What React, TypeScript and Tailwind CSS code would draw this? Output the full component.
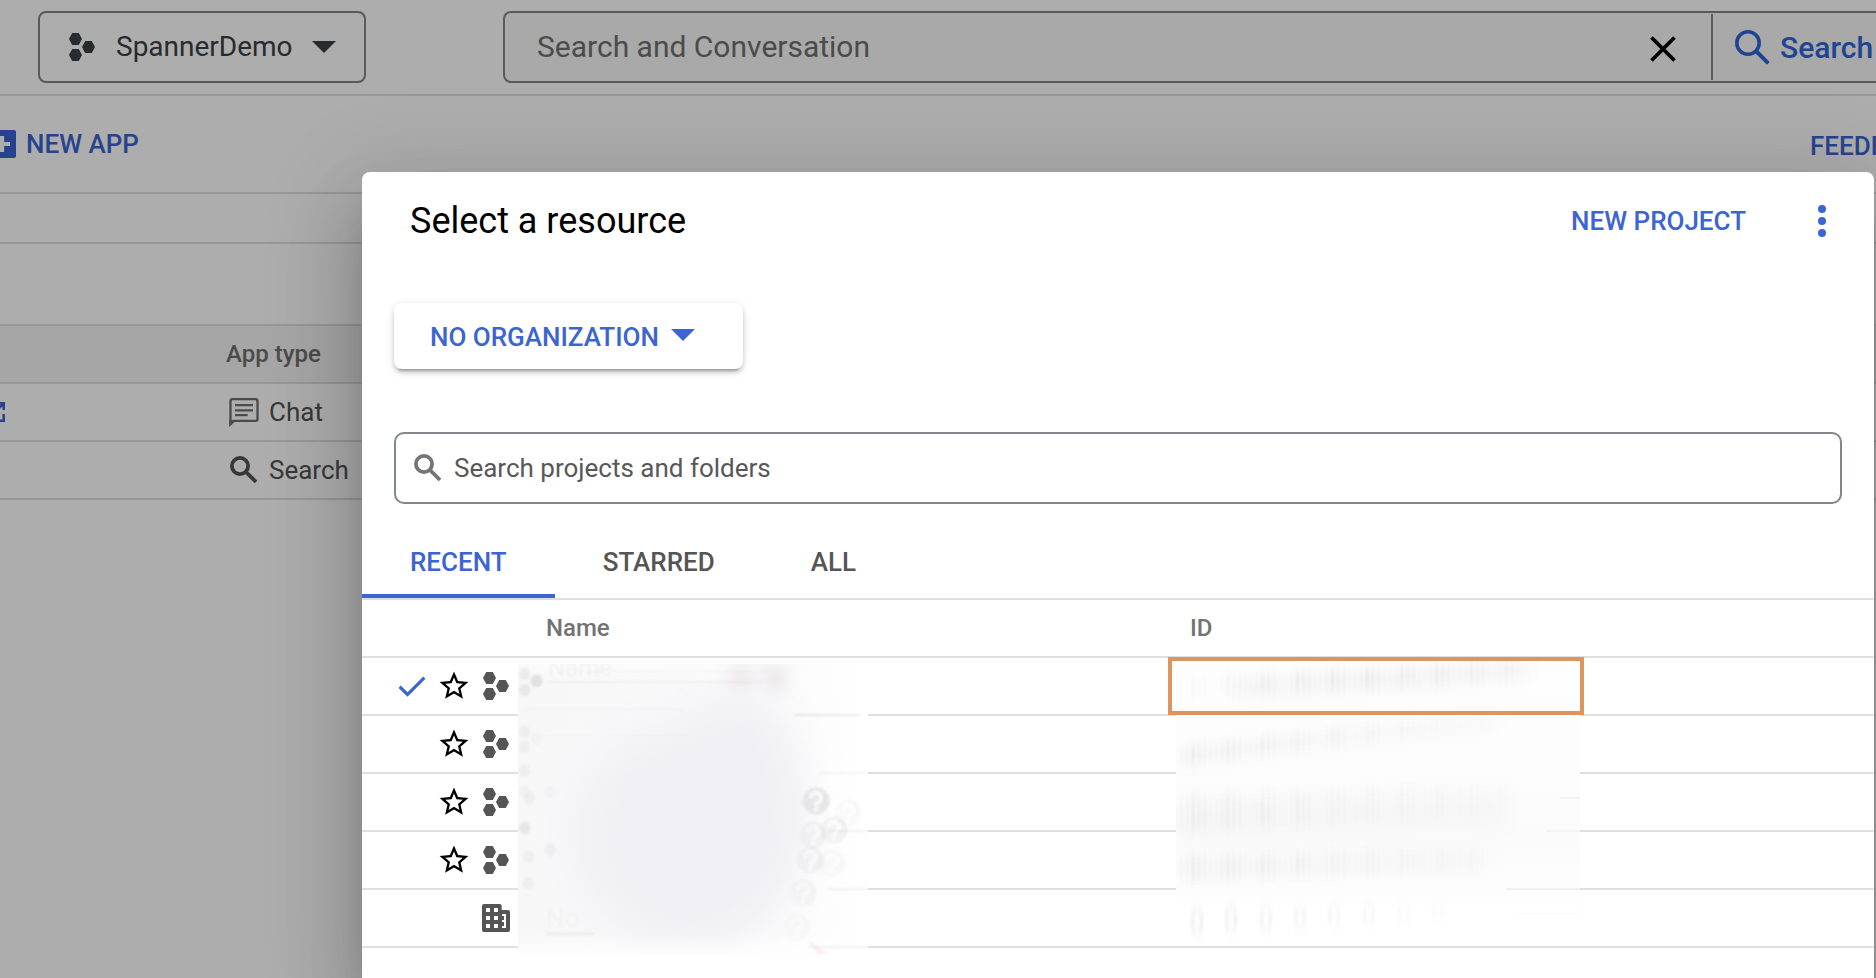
import React from "react";

function HexIcon({ className }: { className: string }) {
  return (
    <svg viewBox="0 0 26 28" className={`h-7 w-[26px] shrink-0 ${className}`} fill="currentColor" aria-hidden="true">
      <path d="M3.2 0h6.6L13 6l-3.2 6H3.2L0 6z" />
      <path d="M3.2 16h6.6l3.2 6-3.2 6H3.2L0 22z" />
      <path d="M16.2 8h6.6L26 14l-3.2 6h-6.6L13 14z" />
    </svg>
  );
}

function Caret({ className }: { className: string }) {
  return (
    <svg viewBox="0 0 24 12" className={`h-3 w-6 shrink-0 ${className}`} fill="currentColor" aria-hidden="true">
      <path d="M0 0h24L12 12z" />
    </svg>
  );
}

function SearchIcon({ className }: { className: string }) {
  return (
    <svg viewBox="0 0 28 28" className={`size-7 shrink-0 ${className}`} fill="none" stroke="currentColor" strokeWidth="3.8" aria-hidden="true">
      <circle cx="10" cy="10" r="8.1" />
      <path d="M15.6 15.6L26 26" />
    </svg>
  );
}

function LargeSearchIcon() {
  return (
    <svg viewBox="0 0 35 35" className="size-[35px] shrink-0" fill="none" stroke="currentColor" aria-hidden="true">
      <circle cx="13" cy="13" r="11.2" strokeWidth="3.6" />
      <path d="M20.5 20.5L33.3 33.3" strokeWidth="4" />
    </svg>
  );
}

function CheckIcon() {
  return (
    <svg viewBox="0 0 24 24" className="size-9 text-[#3c64d2]" fill="currentColor" aria-label="Selected">
      <path d="M9 16.170L4.500 11.670l-1.500 1.600L9 19.200 21 7.100l-1.500-1.500z" />
    </svg>
  );
}

function StarIcon() {
  return (
    <svg viewBox="0 0 24 24" className="size-9" fill="currentColor" aria-hidden="true">
      <path d="M21.6 9.27l-6.9-.6L12 2.3 9.3 8.68l-6.9.59 5.24 4.54-1.57 6.74L12 16.98l5.93 3.57-1.56-6.74 5.23-4.54zM12 15.2l-3.6 2.17.96-4.1-3.18-2.75 4.2-.36L12 6.3l1.64 3.87 4.2.36-3.18 2.75.96 4.1L12 15.2z" />
    </svg>
  );
}

function BuildingIcon() {
  return (
    <svg viewBox="0 0 84 84" className="size-7 shrink-0 text-[#555]" fill="currentColor" fillRule="evenodd" aria-hidden="true">
      <path d="M6 0h47q6 0 6 6v12h19q6 0 6 6v54q0 6-6 6H6q-6 0-6-6V6q0-6 6-6zM12 12v12h12V12zM36 12v12h12V12zM12 36v12h12V36zM36 36v12h12V36zM12 60v12h12V60zM36 60v12h12V60zM60 30v6h6v12h-6v6h6v12h-6v6h12V30z" />
    </svg>
  );
}

function ChatIcon() {
  return (
    <svg viewBox="0 0 88 87" className="h-[29px] w-[30px] shrink-0 text-[#6f6f6f]" aria-hidden="true">
      <path d="M3.5 76V9q0-5.500 5.500-5.500h70q5.500 0 5.500 5.500v54q0 5.500-5.500 5.500H12z" fill="none" stroke="currentColor" strokeWidth="7" />
      <path d="M0 66v21l19-18z" fill="currentColor" />
      <path d="M17 21.500h54M17 37h54M17 51.500h38" stroke="currentColor" strokeWidth="7" />
    </svg>
  );
}

/* Smeared patch that hides the project names. */
function NameRedaction() {
  const ghosts = [
    [298, 137, 0.11],
    [316, 166, 0.05],
    [295, 171, 0.04],
    [330, 149, 0.025],
    [292, 196, 0.045],
    [314, 199, 0.025],
    [285, 229, 0.03],
    [279, 263, 0.018],
  ];
  const hexes = [
    [0, 4, 0.05],
    [12, 11, 0.09],
    [0, 20, 0.06],
    [0, 62, 0.035],
    [12, 69, 0.02],
    [0, 77, 0.03],
    [0, 101, 0.03],
    [0, 122, 0.02],
    [5, 128, 0.03],
    [26, 122, 0.02],
    [0, 158, 0.06],
    [26, 180, 0.03],
    [4, 187, 0.03],
    [4, 213, 0.035],
  ];
  return (
    <svg viewBox="0 0 350 290" className="pointer-events-none absolute top-16 left-[156px] h-[290px] w-[350px]" aria-hidden="true">
      <defs>
        <filter id="soft" filterUnits="userSpaceOnUse" x="-100" y="-100" width="560" height="500">
          <feGaussianBlur stdDeviation="24" />
        </filter>
        <filter id="mid" filterUnits="userSpaceOnUse" x="-100" y="-100" width="560" height="500">
          <feGaussianBlur stdDeviation="9" />
        </filter>
        <filter id="light" filterUnits="userSpaceOnUse" x="-20" y="-20" width="400" height="340">
          <feGaussianBlur stdDeviation="0.8" />
        </filter>
        <linearGradient id="edge" x1="0" x2="1" y1="0" y2="0">
          <stop offset="0" stopColor="#f7f7f8" />
          <stop offset="0.5" stopColor="#f9f9fa" />
          <stop offset="0.8" stopColor="#fcfcfc" />
          <stop offset="1" stopColor="#ffffff" />
        </linearGradient>
        <linearGradient id="disc" x1="0" x2="1" y1="0" y2="0">
          <stop offset="0" stopColor="#333" stopOpacity="0.5" />
          <stop offset="1" stopColor="#333" />
        </linearGradient>
      </defs>
      <rect width="350" height="290" fill="url(#edge)" />
      <ellipse cx="172" cy="172" rx="112" ry="112" fill="#efeff5" filter="url(#soft)" />
      <ellipse cx="222" cy="110" rx="52" ry="80" fill="#efeff5" filter="url(#soft)" />
      <ellipse cx="223" cy="14" rx="10" ry="14" fill="#ebe5e8" filter="url(#mid)" />
      <ellipse cx="257" cy="14" rx="10" ry="14" fill="#e8e1e4" filter="url(#mid)" />
      <rect x="-40" y="282" width="430" height="20" fill="#ffffff" filter="url(#mid)" />
      <rect x="-40" y="-8" width="240" height="12" fill="#ffffff" filter="url(#mid)" />
      <g fill="#000" filter="url(#light)" fontFamily="Roboto, sans-serif">
        <rect x="60" y="7" width="190" height="1" opacity="0.03" />
        <rect x="30" y="17" width="215" height="2" opacity="0.03" />
        <rect x="6" y="45" width="160" height="1" opacity="0.03" />
        <rect x="20" y="71" width="150" height="1" opacity="0.02" />
        <rect x="276" y="50" width="66" height="2" opacity="0.08" />
        <rect x="300" y="108" width="60" height="2" opacity="0.04" />
        <rect x="310" y="166" width="50" height="2" opacity="0.05" />
        <rect x="310" y="224" width="50" height="2" opacity="0.05" />
        <rect x="290" y="282" width="70" height="2" opacity="0.05" />
        <rect x="28" y="269" width="48" height="2" fill="#5a5a9a" opacity="0.1" />
        <text x="30" y="12" fontSize="24" opacity="0.04">Name</text>
        <text x="28" y="263" fontSize="26" opacity="0.025">No</text>
        {hexes.map(([x, y, o], i) => (
          <path key={i} transform={`translate(${x} ${y})`} opacity={o} d="M3.200 0h6.600L13 6l-3.200 6H3.200L0 6z" />
        ))}
        <path d="M290 276l10 14h10z" fill="#d66" opacity="0.1" />
      </g>
      <g filter="url(#light)">
        {ghosts.map(([x, y, o], i) => (
          <g key={i} opacity={o}>
            <circle cx={x} cy={y} r="13.500" fill="url(#disc)" />
            <path d={`M${x - 5} ${y - 3}a5 5 0 1 1 7.500 4.200q-2.500 1.600-2.500 3.800M${x} ${y + 7}v3`} strokeWidth="2.600" fill="none" stroke="#fff" />
          </g>
        ))}
      </g>
    </svg>
  );
}

/* Smeared patch that hides the project IDs. */
function IdRedaction() {
  const bands = [
    { y0: 30, y1: 10, n: 62, h: 20, o: 0.04 },
    { y0: 98, y1: 62, n: 50, h: 18, o: 0.036 },
    { y0: 156, y1: 140, n: 58, h: 34, o: 0.026 },
    { y0: 210, y1: 200, n: 54, h: 24, o: 0.032 },
  ];
  return (
    <svg viewBox="0 0 404 286" className="pointer-events-none absolute top-[58px] left-[814px] h-[286px] w-[404px]" aria-hidden="true">
      <defs>
        <filter id="streak" filterUnits="userSpaceOnUse" x="-20" y="-20" width="450" height="330">
          <feGaussianBlur stdDeviation="1.2 6" />
        </filter>
        <filter id="haze" filterUnits="userSpaceOnUse" x="-60" y="-60" width="540" height="400">
          <feGaussianBlur stdDeviation="9" />
        </filter>
        <linearGradient id="idfade" x1="0" x2="0" y1="0" y2="1">
          <stop offset="0" stopColor="#fefefe" />
          <stop offset="0.3" stopColor="#fdfdfd" />
          <stop offset="0.65" stopColor="#fbfbfb" />
          <stop offset="0.92" stopColor="#ffffff" />
        </linearGradient>
      </defs>
      <rect width="404" height="286" fill="url(#idfade)" />
      <g stroke="#000" fill="none" filter="url(#haze)">
        <path d="M60 30L230 22 350 12" strokeOpacity="0.035" strokeWidth="18" />
        <path d="M0 100L120 84 320 64" strokeOpacity="0.022" strokeWidth="16" />
        <path d="M0 162L330 152" strokeOpacity="0.02" strokeWidth="40" />
        <path d="M0 212L310 202" strokeOpacity="0.022" strokeWidth="20" />
      </g>
      <g filter="url(#streak)" fill="#000">
        {bands.map((b, k) =>
          Array.from({ length: b.n }, (_, i) => {
            const t = i / b.n;
            const wave = [0.4, 0.7, 1.7, 1.3, 1, 0.4][i % 6];
            const fade = k === 0 ? 1.1 - 1.4 * Math.abs(t - 0.5) : 1.1 - t;
            return (
              <rect
                key={`${k}-${i}`}
                x={4 + i * 5.8}
                y={b.y0 + (b.y1 - b.y0) * t - b.h / 2}
                width="3"
                height={b.h}
                opacity={b.o * wave * fade}
              />
            );
          })
        )}
      </g>
      <g fill="none" stroke="#000" strokeWidth="2.500" filter="url(#streak)">
        {[21, 55, 90, 124, 158, 193, 228, 262].map((x, i) => (
          <ellipse key={x} cx={x} cy={264 - i * 1.5} rx="5" ry={12 - i * 0.6} opacity={0.08 - i * 0.008} />
        ))}
      </g>
      <rect x="330" y="230" width="74" height="2" fill="#000" opacity="0.05" />
      <rect x="370" y="172" width="34" height="2" fill="#000" opacity="0.03" />
      <rect x="384" y="139" width="20" height="2" fill="#000" opacity="0.03" />
      <rect x="340" y="255" width="64" height="1" fill="#000" opacity="0.015" />
    </svg>
  );
}

function Console() {
  return (
    <div className="min-h-screen bg-white">
      <header className="flex h-24 items-start border-b-2 border-[#dfdfdf] pt-[11px] pl-[38px]">
        <button className="flex h-[72px] w-[328px] shrink-0 items-center rounded-lg border-2 border-[#80868b] pl-[29px] text-[28px] text-[#3c4043]">
          <HexIcon className="mr-[21px] text-[#3c4043]" />
          <span>SpannerDemo</span>
          <Caret className="ml-[19px] text-[#3c4043]" />
        </button>
        <form className="ml-[137px] flex h-[72px] min-w-0 grow items-center rounded-l-lg border-2 border-r-0 border-[#80868b] bg-[#fafafa]">
          <input
            aria-label="Search"
            defaultValue="Search and Conversation"
            className="h-full min-w-0 grow bg-transparent pb-0.5 pl-8 text-[30px] text-[#6f6f6f] outline-none"
          />
          <button type="button" aria-label="Clear" className="mr-[35px] shrink-0 p-0 text-black">
            <svg viewBox="0 0 26 26" className="mt-1 size-[26px]" stroke="currentColor" strokeWidth="3.800" aria-hidden="true">
              <path d="M1.500 1.500l23 23M24.500 1.500l-23 23" />
            </svg>
          </button>
          <button type="button" className="flex h-[66px] w-[165px] shrink-0 items-center gap-2.5 overflow-hidden border-l-2 border-[#80868b] pl-[22px] text-[30px] font-medium text-[#2e65d6]">
            <LargeSearchIcon />
            Search
          </button>
        </form>
      </header>
      <div className="flex h-[98px] items-center justify-between overflow-hidden border-b-2 border-[#dfdfdf] text-[26px] font-medium text-[#3c64d2]">
        <button className="-ml-3 flex items-center gap-2.5">
          <svg viewBox="0 0 28 28" className="size-7" aria-hidden="true">
            <rect width="28" height="28" rx="2" fill="currentColor" />
            <path d="M14 6v16M6 14h16" stroke="#fff" strokeWidth="4.200" />
          </svg>
          NEW APP
        </button>
        <button className="-mr-[70px] w-[136px] shrink-0 pt-1 text-left">FEEDBACK</button>
      </div>
      <div className="h-[50px] border-b-2 border-[#dfdfdf]" />
      <div className="h-[82px] border-b-2 border-[#dfdfdf]" />
      <table className="w-full table-fixed border-separate border-spacing-0 text-left text-[26px] text-[#535353]">
        <colgroup>
          <col className="w-[226px]" />
          <col />
        </colgroup>
        <thead>
          <tr className="h-[58px] bg-[#f5f5f5] text-2xl text-[#6f6f6f]">
            <th className="border-b-2 border-[#dfdfdf] p-0" />
            <th className="border-b-2 border-[#dfdfdf] p-0 font-medium">App type</th>
          </tr>
        </thead>
        <tbody>
          <tr className="h-[58px]">
            <td className="border-b-2 border-[#dfdfdf] p-0">
              <a href="#app" aria-label="Open app" className="-ml-[15px] block w-5 text-[#3c64d2]">
                <svg viewBox="0 0 20 20" className="size-5" fill="none" stroke="currentColor" strokeWidth="2.600" aria-hidden="true">
                  <path d="M8 1.300H1.300v17.400h17.400V12M12 1.300h6.700V8M18 2L7 13" />
                </svg>
              </a>
            </td>
            <td className="border-b-2 border-[#dfdfdf] p-0">
              <div className="flex items-center gap-[10px] pl-[3px]">
                <ChatIcon />
                Chat
              </div>
            </td>
          </tr>
          <tr className="h-[58px]">
            <td className="border-b-2 border-[#dfdfdf] p-0" />
            <td className="border-b-2 border-[#dfdfdf] p-0">
              <div className="flex items-center gap-[11px] pl-1">
                <SearchIcon className="text-[#535353]" />
                Search
              </div>
            </td>
          </tr>
        </tbody>
      </table>
    </div>
  );
}

const tabs = ["RECENT", "STARRED", "ALL"];

const rows = [
  { selected: true, org: false },
  { selected: false, org: false },
  { selected: false, org: false },
  { selected: false, org: false },
  { selected: false, org: true },
];

function ResourceDialog() {
  return (
    <section
      role="dialog"
      aria-modal="true"
      aria-labelledby="dialog-title"
      className="min-w-0 grow self-stretch rounded-t-lg bg-white shadow-[0_22px_30px_-14px_rgba(0,0,0,0.2),0_48px_76px_6px_rgba(0,0,0,0.14),0_18px_92px_16px_rgba(0,0,0,0.12)]"
    >
      <div className="flex h-[98px] items-center pr-[36px] pl-12">
        <h2 id="dialog-title" className="grow text-[36px] text-black">
          Select a resource
        </h2>
        <button className="text-[26px] font-medium text-[#3c64d2]">NEW PROJECT</button>
        <button aria-label="More options" className="ml-[60px] flex w-8 justify-center text-[#3c64d2]">
          <svg viewBox="0 0 8 32" className="h-8 w-2" fill="currentColor" aria-hidden="true">
            <circle cx="4" cy="4" r="4" />
            <circle cx="4" cy="16" r="4" />
            <circle cx="4" cy="28" r="4" />
          </svg>
        </button>
      </div>
      <button className="mt-[33px] ml-8 flex h-[66px] w-[349px] items-center rounded-lg bg-white pt-0.5 pl-9 text-[26px] font-medium text-[#3c64d2] shadow-[0_6px_2px_-4px_rgba(0,0,0,0.2),0_4px_4px_0_rgba(0,0,0,0.14),0_2px_10px_0_rgba(0,0,0,0.12)]">
        NO ORGANIZATION
        <Caret className="mb-1 ml-3" />
      </button>
      <label className="mx-8 mt-[63px] flex h-[72px] items-center rounded-[10px] border-2 border-[#80868b] pl-[18px]">
        <SearchIcon className="text-[#757575]" />
        <input
          aria-label="Search projects and folders"
          placeholder="Search projects and folders"
          className="ml-3 h-full min-w-0 grow bg-transparent text-[26px] text-[#585858] outline-none placeholder:text-[#585858]"
        />
      </label>
      <div role="tablist" className="mt-6 flex h-[72px] border-b-2 border-[#dfdfdf] text-[26px] font-medium">
        {tabs.map((tab, i) => (
          <button
            key={tab}
            role="tab"
            aria-selected={i === 0}
            className={
              i === 0
                ? "border-b-4 border-[#3c64d2] px-12 pt-0.5 text-[#3c64d2]"
                : "border-b-4 border-transparent px-12 pt-0.5 text-[#555]"
            }
          >
            {tab}
          </button>
        ))}
      </div>
      <div className="relative">
        <table className="w-full table-fixed border-separate border-spacing-0 text-left">
          <colgroup>
            <col className="w-[184px]" />
            <col className="w-[644px]" />
            <col />
          </colgroup>
          <thead>
            <tr className="h-[58px] text-2xl text-[#737373]">
              <th className="border-b-2 border-[#dfdfdf] p-0" />
              <th className="border-b-2 border-[#dfdfdf] p-0 font-medium">Name</th>
              <th className="border-b-2 border-[#dfdfdf] p-0 font-medium">ID</th>
            </tr>
          </thead>
          <tbody>
            {rows.map((row, i) => (
              <tr key={i} className="h-[58px]">
                <td className="border-b-2 border-[#dfdfdf] p-0">
                  <div className="flex items-center gap-1.5 pl-8">
                    <span className="size-9 shrink-0">{row.selected && <CheckIcon />}</span>
                    {row.org ? (
                      <span className="size-9 shrink-0" />
                    ) : (
                      <button aria-label="Star project" className="size-9 shrink-0 text-black">
                        <StarIcon />
                      </button>
                    )}
                    <span className="flex w-9 shrink-0 justify-center">
                      {row.org ? <BuildingIcon /> : <HexIcon className="text-[#555]" />}
                    </span>
                  </div>
                </td>
                <td className="border-b-2 border-[#dfdfdf] p-0" />
                <td className="border-b-2 border-[#dfdfdf] p-0" />
              </tr>
            ))}
          </tbody>
        </table>
        <NameRedaction />
        <IdRedaction />
        <div className="pointer-events-none absolute top-[57px] left-[806px] h-[58px] w-[416px] border-4 border-[#db965f]" />
      </div>
    </section>
  );
}

export default function App() {
  return (
    <div className="relative h-screen overflow-hidden font-['Roboto',sans-serif]">
      <Console />
      <div className="absolute inset-0 flex overflow-hidden bg-black/32 pt-[172px] pr-0.5 pl-[362px]">
        <ResourceDialog />
      </div>
    </div>
  );
}
